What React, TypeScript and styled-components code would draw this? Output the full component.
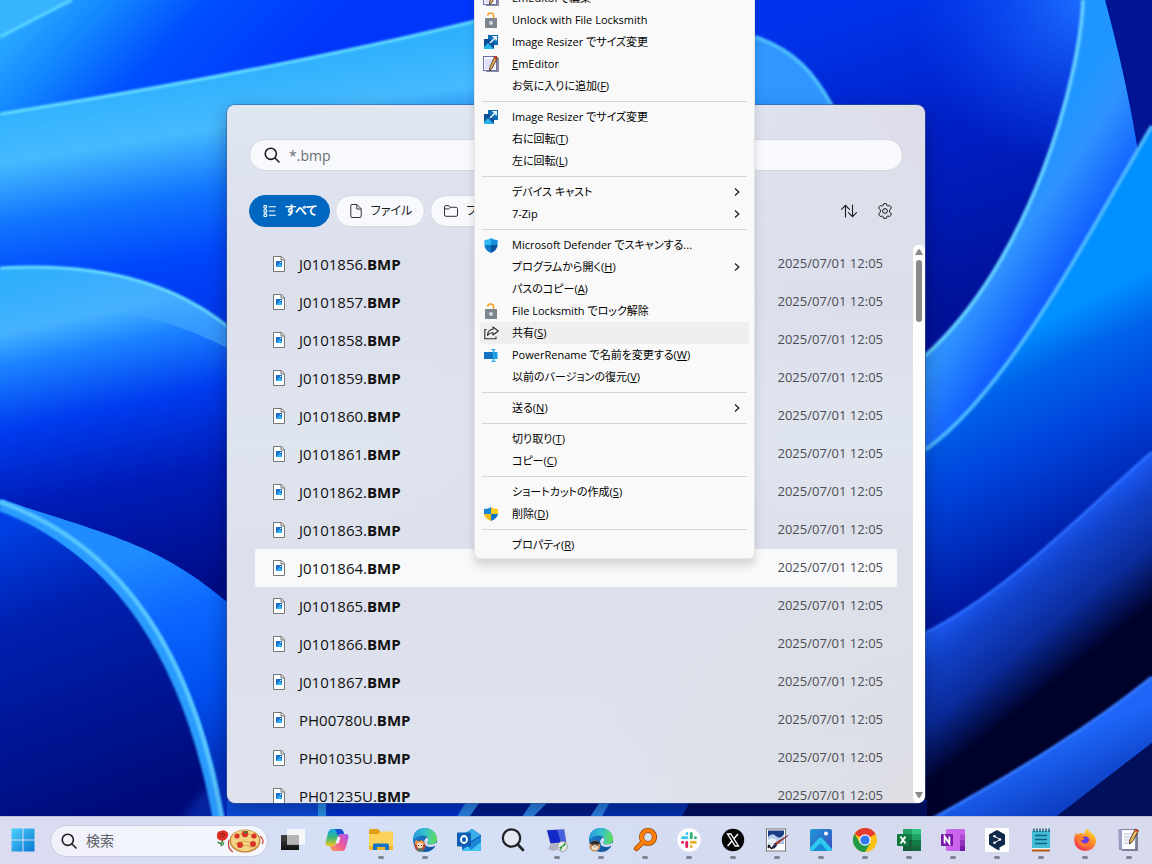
import React from "react";
import styled, { createGlobalStyle } from "styled-components";

const GlobalStyle = createGlobalStyle`
  * { box-sizing: border-box; }
  body {
    margin: 0;
    font-family: "Open Sans", "Noto Sans CJK JP", sans-serif;
    font-feature-settings: "palt" 1;
    color: #1b1b1b;
  }
  button, input { font: inherit; color: inherit; font-feature-settings: inherit; }
`;

const Desktop = styled.div`
  position: relative;
  display: flex;
  flex-direction: column;
  height: 100vh;
  overflow: hidden;
  background: #0022b8;
`;

const WallpaperSvg = styled.svg`
  position: absolute;
  inset: 0;
  width: 100%;
  height: 100%;
`;

const WorkArea = styled.main`
  position: relative;
  flex: 1;
  min-height: 0;
  display: flex;
  justify-content: center;
  padding: 105px 16px 13px;
`;

const Window = styled.section`
  position: relative;
  display: flex;
  flex-direction: column;
  flex: 0 1 698px;
  min-width: 0;
  border-radius: 8px;
  background:
    radial-gradient(circle at 52% 56%, rgba(222, 222, 235, 0.9), rgba(222, 222, 235, 0) 40%),
    radial-gradient(circle at 100% 0%, #dddde9, rgba(221, 221, 233, 0) 30%),
    radial-gradient(circle at 100% 100%, #dddee4, rgba(221, 222, 228, 0) 35%),
    linear-gradient(180deg, #e0e7f0 0, #dde2ee 14%, #dcdfec 28%, #dfe5ef 48%, #dde0ec 66%, #dfe3ee 100%);
  box-shadow: 0 0 0 1px rgba(60, 90, 150, 0.55), 0 8px 20px rgba(0, 0, 30, 0.35);
`;

const SearchBox = styled.label`
  display: flex;
  align-items: center;
  gap: 9px;
  height: 32px;
  margin: 34px 22px 0;
  padding: 0 14px;
  border: 1px solid #d3d6df;
  border-radius: 16px;
  background: #f8f9fc;
`;

const SearchInput = styled.input`
  flex: 1;
  min-width: 0;
  padding: 0;
  border: 0;
  outline: 0;
  background: transparent;
  font-size: 14px;
  color: #6a6c70;
`;

const FilterBar = styled.div`
  display: flex;
  align-items: center;
  gap: 5px;
  margin: 24px 28px 0 22px;
`;

const Chip = styled.button<{ $active?: boolean }>`
  display: flex;
  align-items: center;
  gap: 8px;
  height: 32px;
  padding: 0 12px 0 13px;
  border: 1px solid ${(p) => (p.$active ? "#0067c0" : "#d6d8e2")};
  border-radius: 16px;
  background: ${(p) => (p.$active ? "#0067c0" : "#f8f9fc")};
  color: ${(p) => (p.$active ? "#ffffff" : "#1b1b1b")};
  font-size: 12px;
  font-weight: ${(p) => (p.$active ? 700 : 400)};
  line-height: 20px;
  white-space: nowrap;
`;

const Spacer = styled.span`
  flex: 1;
`;

const IconButton = styled.button`
  display: grid;
  place-items: center;
  width: 24px;
  height: 24px;
  margin-left: 7px;
  padding: 0;
  border: 0;
  background: transparent;
`;

const Results = styled.div`
  flex: 1;
  min-height: 0;
  display: flex;
  gap: 16px;
  margin-top: 18px;
  padding-left: 28px;
`;

const ListClip = styled.div`
  flex: 1;
  min-width: 0;
  overflow: hidden;
`;

const FileTable = styled.table`
  width: 100%;
  border-collapse: collapse;
`;

const FileRow = styled.tr<{ $selected?: boolean }>`
  height: 38px;
  background: ${(p) => (p.$selected ? "#f8f9fb" : "transparent")};
`;

const NameCell = styled.td`
  padding: 0 0 0 18px;
  border-radius: 3px 0 0 3px;
`;

const NameBox = styled.div`
  display: flex;
  align-items: center;
  gap: 14px;
  font-size: 15px;
  line-height: 20px;
  color: #111;
`;

const Match = styled.b`
  font-weight: 700;
`;

const DateCell = styled.td`
  padding: 0 14px 2px 0;
  border-radius: 0 3px 3px 0;
  text-align: right;
  font-size: 13px;
  line-height: 18px;
  color: #4c4d52;
`;

const ScrollTrack = styled.div`
  display: flex;
  flex-direction: column;
  align-items: center;
  width: 12px;
  padding: 4px 0 5px;
  border-radius: 6px 6px 8px 6px;
  background: #fdfdfe;
`;

const ScrollThumb = styled.div`
  width: 6px;
  height: 62px;
  margin: 5px 0 auto;
  border-radius: 3px;
  background: #8a8a8a;
`;

const ContextMenu = styled.div`
  position: absolute;
  top: -124px;
  left: 247px;
  z-index: 2;
  width: 281px;
  padding: 5px 5px 2px;
  border: 1px solid #e4e4e6;
  border-radius: 6px;
  background: #f9f9f9;
  box-shadow: 0 7px 9px rgba(0, 0, 0, 0.14);
`;

const MenuRow = styled.button<{ $hover?: boolean }>`
  display: grid;
  grid-template-columns: 22px 1fr 6px;
  align-items: center;
  column-gap: 10px;
  width: 100%;
  height: 22px;
  padding: 0 9px 0 0;
  border: 0;
  border-radius: 4px;
  background: ${(p) => (p.$hover ? "#efefef" : "transparent")};
  color: #000;
  font-size: 11px;
  line-height: 18px;
  text-align: left;
  white-space: nowrap;
`;

const MenuIcon = styled.span`
  display: grid;
  place-items: center;
`;

const MenuDivider = styled.hr`
  height: 1px;
  margin: 4px 2px;
  border: 0;
  background: #d5d5d5;
`;

const Taskbar = styled.nav`
  position: relative;
  z-index: 3;
  display: flex;
  align-items: center;
  height: 48px;
  padding-left: 1px;
  border-top: 1px solid #b9bfd4;
  background: linear-gradient(90deg, #dcdcf1 0, #d6dcf3 18%, #d4e0f7 30%, #d5def4 50%, #d6daee 75%, #d8daee 100%);
`;

const TaskButton = styled.button`
  position: relative;
  display: grid;
  place-items: center;
  flex: 0 0 44px;
  height: 47px;
  padding: 0 0 1px;
  border: 0;
  background: transparent;
`;

const RunningDot = styled.span`
  position: absolute;
  bottom: 5px;
  left: 19px;
  width: 6px;
  height: 3px;
  border-radius: 2px;
  background: #7f8491;
`;

const TaskSearch = styled.label`
  display: flex;
  align-items: center;
  gap: 9px;
  flex: none;
  width: 218px;
  height: 32px;
  margin: 0 3px 0 5px;
  padding: 0 3px 0 10px;
  border: 1px solid #c9cde0;
  border-radius: 16px;
  background: linear-gradient(90deg, #f1f1fa, #f3f7fe);
`;

const TaskSearchInput = styled.input`
  flex: 1;
  width: 100%;
  min-width: 0;
  padding: 0;
  border: 0;
  outline: 0;
  background: transparent;
  font-size: 14px;
  &::placeholder { color: #5c5e66; opacity: 1; }
`;

/* ---------- wallpaper ---------- */

const Wallpaper = () => (
  <WallpaperSvg viewBox="0 0 1152 864" preserveAspectRatio="xMidYMid slice" aria-hidden="true">
    <defs>
      <linearGradient id="topband" gradientUnits="userSpaceOnUse" x1="10" y1="10" x2="190" y2="180">
        <stop offset="0" stopColor="#2fb0ff" />
        <stop offset="0.28" stopColor="#1286ff" />
        <stop offset="0.55" stopColor="#0050ff" />
        <stop offset="1" stopColor="#0036fa" />
      </linearGradient>
      <linearGradient id="band2" gradientUnits="userSpaceOnUse" x1="200" y1="75" x2="245" y2="345">
        <stop offset="0" stopColor="#2fb0fd" />
        <stop offset="0.2" stopColor="#46baff" />
        <stop offset="0.42" stopColor="#1174ff" />
        <stop offset="0.65" stopColor="#0046fc" />
        <stop offset="1" stopColor="#0030e4" />
      </linearGradient>
      <linearGradient id="band3" gradientUnits="userSpaceOnUse" x1="80" y1="268" x2="150" y2="600">
        <stop offset="0" stopColor="#2eaefc" />
        <stop offset="0.14" stopColor="#46b2ff" />
        <stop offset="0.24" stopColor="#1b82ff" />
        <stop offset="0.42" stopColor="#003cf0" />
        <stop offset="0.65" stopColor="#001cb8" />
        <stop offset="1" stopColor="#000c86" />
      </linearGradient>
      <linearGradient id="arc3shine" gradientUnits="userSpaceOnUse" x1="0" y1="0" x2="227" y2="0">
        <stop offset="0" stopColor="#46b2ff" stopOpacity="0" />
        <stop offset="1" stopColor="#46a8ff" />
      </linearGradient>
      <linearGradient id="flap" gradientUnits="userSpaceOnUse" x1="150" y1="550" x2="215" y2="770">
        <stop offset="0" stopColor="#1f8bff" />
        <stop offset="0.3" stopColor="#0c66ff" />
        <stop offset="0.65" stopColor="#0050f0" />
        <stop offset="1" stopColor="#0030c0" />
      </linearGradient>
      <linearGradient id="low" gradientUnits="userSpaceOnUse" x1="20" y1="520" x2="130" y2="816">
        <stop offset="0" stopColor="#0040e4" />
        <stop offset="0.3" stopColor="#0020b0" />
        <stop offset="1" stopColor="#000a78" />
      </linearGradient>
      <linearGradient id="right" gradientUnits="userSpaceOnUse" x1="860" y1="0" x2="960" y2="300">
        <stop offset="0" stopColor="#0034ec" />
        <stop offset="0.5" stopColor="#001fc4" />
        <stop offset="1" stopColor="#00129a" />
      </linearGradient>
      <radialGradient id="topRight" gradientUnits="userSpaceOnUse" cx="1080" cy="0" r="170">
        <stop offset="0" stopColor="#1c6cff" />
        <stop offset="1" stopColor="#0a4cf8" stopOpacity="0" />
      </radialGradient>
      <linearGradient id="ribA" gradientUnits="userSpaceOnUse" x1="1020" y1="170" x2="1100" y2="225">
        <stop offset="0" stopColor="#1f96ff" />
        <stop offset="0.4" stopColor="#2f92ff" />
        <stop offset="1" stopColor="#0f5cff" />
      </linearGradient>
      <linearGradient id="ribB" gradientUnits="userSpaceOnUse" x1="1025" y1="330" x2="1120" y2="530">
        <stop offset="0" stopColor="#0090ff" />
        <stop offset="0.2" stopColor="#0062ea" />
        <stop offset="0.5" stopColor="#0044dc" />
        <stop offset="1" stopColor="#0018a0" />
      </linearGradient>
      <linearGradient id="ribC" gradientUnits="userSpaceOnUse" x1="1020" y1="560" x2="1093" y2="652">
        <stop offset="0" stopColor="#1b5af2" />
        <stop offset="0.2" stopColor="#1243cc" />
        <stop offset="0.6" stopColor="#0a2c9c" />
        <stop offset="1" stopColor="#00022c" />
      </linearGradient>
      <linearGradient id="ribD" gradientUnits="userSpaceOnUse" x1="1060" y1="740" x2="1090" y2="810">
        <stop offset="0" stopColor="#1d66f8" />
        <stop offset="1" stopColor="#0a36b8" />
      </linearGradient>
      <filter id="glow" x="-10%" y="-10%" width="120%" height="120%"><feGaussianBlur stdDeviation="1" /></filter>
      <filter id="wide" x="-10%" y="-10%" width="120%" height="120%"><feGaussianBlur stdDeviation="5" /></filter>
    </defs>
    <rect width="1152" height="864" fill="#0020c0" />
    <rect x="700" width="452" height="864" fill="url(#right)" />
    <rect x="900" width="200" height="180" fill="url(#topRight)" />
    <path d="M0 0H480V24C330 57 160 88 0 118Z" fill="url(#topband)" />
    <path d="M0 0H72C48 12 25 24 0 37Z" fill="#38b4fe" />
    <path d="M0 37C25 24 48 12 72 0" fill="none" stroke="#5bd6ff" strokeWidth="3" filter="url(#glow)" />
    <path d="M0 114C160 88 330 57 475 21L500 14V500H0Z" fill="url(#band2)" />
    <path d="M0 114C160 88 330 57 475 21" fill="none" stroke="#63dcff" strokeWidth="3" filter="url(#glow)" />
    <path d="M0 268C95 262 170 280 227 326V700H0Z" fill="url(#band3)" />
    <path d="M0 268C95 262 170 280 227 326V348C170 318 100 302 0 302Z" fill="url(#arc3shine)" opacity="0.7" />
    <path d="M0 268C95 262 170 280 227 326" fill="none" stroke="#66dcff" strokeWidth="3" filter="url(#glow)" />
    <path d="M0 499C110 535 160 545 227 602V816C200 700 140 590 0 505Z" fill="url(#flap)" />
    <path d="M0 508C120 565 190 660 216 816V864H0Z" fill="url(#low)" />
    <path d="M150 864C180 830 190 800 214 782L226 864Z" fill="#0a3cc8" opacity="0.5" filter="url(#wide)" />
    <path d="M0 505C120 548 190 660 219 820" fill="none" stroke="#2a9cff" strokeWidth="12" filter="url(#glow)" />
    <path d="M0 502C122 545 194 655 222 820" fill="none" stroke="#5cc8ff" strokeWidth="4" filter="url(#glow)" />

    <path d="M755 37C795 50 815 75 832 106H755Z" fill="#2f97ff" />
    <path d="M755 37C795 50 815 75 832 106" fill="none" stroke="#4cbcff" strokeWidth="4" filter="url(#glow)" />
    <path d="M1105 0C1118 48 1130 100 1138 152L1152 126V0Z" fill="#001494" />
    <path d="M1083 0C1080 80 1030 262 925 356V470L1080 280L1138 152C1130 100 1118 48 1105 0Z" fill="url(#ribA)" />
    <path d="M1083 0C1080 80 1030 262 925 356" fill="none" stroke="#62ccff" strokeWidth="4" filter="url(#glow)" />
    <path d="M1152 126C1090 230 1010 390 925 450V640L1152 500Z" fill="url(#ribB)" />
    <path d="M1152 126C1090 230 1010 390 925 450" fill="none" stroke="#4cb8ff" strokeWidth="4" filter="url(#glow)" />
    <path d="M1152 452C1080 515 1010 590 925 633V864H1152Z" fill="#00022c" />
    <path d="M1152 452C1080 515 1010 590 925 633V864H1152Z" fill="url(#ribC)" />
    <path d="M1152 452C1080 515 1010 590 925 633" fill="none" stroke="#2c6cff" strokeWidth="3" filter="url(#glow)" />
    <path d="M1152 677C1090 727 1020 770 930 820H1052L1152 743Z" fill="url(#ribD)" />
    <path d="M1152 677C1090 727 1020 770 930 820" fill="none" stroke="#3478ff" strokeWidth="3" filter="url(#glow)" />
    <path d="M1152 743L1052 820H1152Z" fill="#020f5c" />

    <rect x="227" y="800" width="700" height="20" fill="#001c8c" />
    <path d="M227 800H318V820H227Z" fill="#0a4ee0" />
    <path d="M325 800H470L455 820H325Z" fill="#0034d0" />
    <path d="M318 800H326V820H318Z" fill="#2c96f0" />
    <path d="M466 802H480L467 820H455ZM532 802H548L530 820H520ZM600 802H616L602 820H588Z" fill="#2b86ec" />
    <path d="M610 802H700L680 820H600Z" fill="#0034b8" />
    <path d="M690 802H927V820H680Z" fill="#000f60" />
  </WallpaperSvg>
);

/* ---------- small glyphs ---------- */

const SearchGlyph = ({ size = 16 }: { size?: number }) => (
  <svg width={size} height={size} viewBox="0 0 16 16" fill="none" stroke="#1f1f1f" strokeWidth="1.6" strokeLinecap="round" aria-hidden="true">
    <circle cx="6.8" cy="6.8" r="5.6" />
    <path d="M11 11L15 15" />
  </svg>
);

const AllGlyph = () => (
  <svg width="14" height="14" viewBox="0 0 14 14" fill="none" stroke="#fff" strokeWidth="1.1" aria-hidden="true">
    <rect x="1" y="1.5" width="2.6" height="2.6" rx="0.6" />
    <rect x="1" y="5.7" width="2.6" height="2.6" rx="0.6" />
    <rect x="1" y="9.9" width="2.6" height="2.6" rx="0.6" />
    <path d="M5.8 2.8H13M5.8 7H12M5.8 11.2H13" />
  </svg>
);

const FileGlyph = () => (
  <svg width="14" height="14" viewBox="0 0 14 14" fill="none" stroke="#333" aria-hidden="true">
    <path d="M3 .5H8L12.2 4.8V12.3A1.2 1.2 0 0 1 11 13.5H3A1.2 1.2 0 0 1 1.8 12.3V1.7A1.2 1.2 0 0 1 3 .5Z" />
    <path d="M7.8 .8V5H12" />
  </svg>
);

const FolderGlyph = () => (
  <svg width="14" height="14" viewBox="0 0 14 14" fill="none" stroke="#333" aria-hidden="true">
    <path d="M.5 3A1.3 1.3 0 0 1 1.8 1.7H4.8L6.4 3.3H12.2A1.3 1.3 0 0 1 13.5 4.6V11A1.3 1.3 0 0 1 12.2 12.3H1.8A1.3 1.3 0 0 1 .5 11Z" />
    <path d="M.5 4.9H4.8L6.4 3.3" />
  </svg>
);

const SortGlyph = () => (
  <svg width="18" height="14" viewBox="0 0 18 14" fill="none" stroke="#1b1b1b" strokeWidth="1.1" strokeLinecap="round" aria-hidden="true">
    <path d="M5.5 13V1.5M1.5 5.3L5.5 1.3L9.5 5.3M12.5 1V12.5M8.5 8.7L12.5 12.7L16.5 8.7" />
  </svg>
);

const GearGlyph = () => (
  <svg width="16" height="16" viewBox="0 0 16 16" fill="none" stroke="#1b1b1b" strokeLinejoin="round" aria-hidden="true">
    <circle cx="8" cy="8" r="2.4" />
    <path d="M6.5 .8Q8 .4 9.500 .8L9.900 2.400Q10.200 3.100 11 3L12.800 2.500Q13.900 3.600 14.400 5L13.200 6.300Q12.500 7 12.500 8Q12.500 9 13.200 9.700L14.400 11Q13.900 12.400 12.800 13.500L11 13Q10.200 12.900 9.900 13.600L9.500 15.200Q8 15.600 6.500 15.200L6.100 13.600Q5.800 12.900 5 13L3.200 13.500Q2.100 12.400 1.600 11L2.800 9.700Q3.500 9 3.500 8Q3.500 7 2.800 6.300L1.600 5Q2.100 3.600 3.200 2.500L5 3Q5.800 3.100 6.100 2.400Z" />
  </svg>
);

const BmpGlyph = () => (
  <svg width="12" height="16" viewBox="0 0 12 16" aria-hidden="true">
    <path d="M.5 .5H8.500L11.500 3.500V15.500H.5Z" fill="#fff" stroke="#767676" />
    <path d="M8 .5V4H11.500" fill="#e8e8e8" stroke="#767676" />
    <rect x="3" y="5" width="6" height="6" fill="#1b6fd0" />
    <path d="M3 11L6.500 7L9 9.500V11Z" fill="#2fb4f4" />
    <rect x="7" y="6" width="1" height="1" fill="#fff" />
  </svg>
);

const ArrowGlyph = ({ down }: { down?: boolean }) => (
  <svg width="8" height="6" viewBox="0 0 8 6" aria-hidden="true">
    <path d={down ? "M0 0H8L5 5.500Q4 6.300 3 5.500Z" : "M0 6H8L5 .5Q4 -.3 3 .5Z"} fill="#8a8a8a" />
  </svg>
);

const ChevronGlyph = () => (
  <svg width="6" height="10" viewBox="0 0 6 10" fill="none" stroke="#222" strokeWidth="1.3" aria-hidden="true">
    <path d="M1 1.500L4.800 5L1 8.500" />
  </svg>
);

const EditorGlyph = () => (
  <svg width="16" height="16" viewBox="0 0 16 16" aria-hidden="true">
    <path d="M3 2H16V16H3Z" fill="#8d8d99" />
    <rect x=".5" y=".5" width="13" height="14" fill="#f6f7ff" stroke="#6f6fb0" />
    <path d="M2 4H10M2 6H9M2 8H8M2 10H7M2 12H7" stroke="#b8bde8" strokeWidth=".8" />
    <path d="M12 0L14.500 1.500L9 12.500L6.500 14.500L6.800 11.500Z" fill="#e9b45a" stroke="#3a2310" strokeWidth=".8" />
    <path d="M12 0L14.500 1.500L13.300 3.800L10.800 2.500Z" fill="#cf3a2c" />
  </svg>
);

const LockGlyph = () => (
  <svg width="14" height="16" viewBox="0 0 14 16" aria-hidden="true">
    <path d="M3.600 3.500Q4 1 6.500 1Q9.600 1 9.600 4V6.500" fill="none" stroke="#f0a024" strokeWidth="1.600" />
    <rect x="1" y="6" width="12" height="10" rx=".8" fill="#7d858e" />
    <circle cx="7" cy="11" r="2" fill="#d5dae0" />
  </svg>
);

const ResizeGlyph = () => (
  <svg width="14" height="14" viewBox="0 0 14 14" aria-hidden="true">
    <rect x="4" width="10" height="10" fill="#0b6cb8" />
    <path d="M0 4H5L10 9V14H0Z" fill="#0f4f98" />
    <path d="M0 12L4 8L10 14H0Z" fill="#28b4e8" />
    <path d="M6 8L12 2M8.500 1.800H12.200V5.500" stroke="#fff" strokeWidth="1.400" fill="none" />
  </svg>
);

const DefenderGlyph = () => (
  <svg width="14" height="15" viewBox="0 0 14 15" aria-hidden="true">
    <path d="M7 0Q9.500 1.800 13.600 2V7H7Z" fill="#178ee0" />
    <path d="M7 0Q4.500 1.800 .4 2V7H7Z" fill="#31b8ee" />
    <path d="M.4 7H7V15Q.6 12 .4 7Z" fill="#0f78cc" />
    <path d="M13.600 7H7V15Q13.400 12 13.600 7Z" fill="#0a529c" />
  </svg>
);

const UacGlyph = () => (
  <svg width="14" height="14" viewBox="0 0 14 14" aria-hidden="true">
    <path d="M7 0Q9.500 1.800 14 2V7H7Z" fill="#fccb1c" />
    <path d="M7 0Q4.500 1.800 0 2V7H7Z" fill="#1a86d8" />
    <path d="M0 7H7V14Q.8 11.500 0 7Z" fill="#f8c010" />
    <path d="M14 7H7V14Q13.200 11.500 14 7Z" fill="#1474c4" />
  </svg>
);

const ShareGlyph = () => (
  <svg width="15" height="14" viewBox="0 0 15 14" fill="none" stroke="#2a2a2a" strokeWidth="1.100" strokeLinejoin="round" aria-hidden="true">
    <path d="M2.500 3.500H.8V12.800H12V10.500" />
    <path d="M9 1L14.300 5L9 9V6.800Q5.500 6.600 3.500 9.300Q3.800 3.800 9 3.300Z" />
  </svg>
);

const RenameGlyph = () => (
  <svg width="14" height="13" viewBox="0 0 14 13" aria-hidden="true">
    <rect y="3" width="9" height="7" fill="#1272c4" />
    <rect x="10" y="3" width="3.500" height="7" fill="#1d9be0" />
    <path d="M7.500 .7H11.500M7.500 12.300H11.500M9.500 .7V12.300" stroke="#28a8e8" strokeWidth="1.300" />
  </svg>
);

/* ---------- taskbar icons ---------- */

const T = ({ children }: { children: React.ReactNode }) => (
  <svg width="24" height="24" viewBox="0 0 24 24" aria-hidden="true">{children}</svg>
);

const StartIcon = () => (
  <T>
    <defs><linearGradient id="win" x1="0" y1="0" x2="1" y2="1"><stop offset="0" stopColor="#4cd0fb" /><stop offset="1" stopColor="#0a78d4" /></linearGradient></defs>
    <path d="M.5 .5H11.500V11.500H.5ZM12.500 .5H23.500V11.500H12.500ZM.5 12.500H11.500V23.500H.5ZM12.500 12.500H23.500V23.500H12.500Z" fill="url(#win)" />
  </T>
);

const PizzaArt = () => (
  <svg width="48" height="26" viewBox="0 0 48 26" aria-hidden="true">
    <path d="M6 10Q7 14 5 18" stroke="#2f7d3a" strokeWidth="1.400" fill="none" />
    <path d="M1 14Q4 13 6 16Q3 17 1 14ZM8 13Q9 17 6 18Z" fill="#3c9148" />
    <path d="M1 7Q1 3 5 3Q9 1 12 5Q13 9 9 12Q4 14 1 10Z" fill="#dc2f28" />
    <path d="M4 6Q7 4 9 7Q7 10 5 8" stroke="#9c1714" fill="none" />
    <path d="M13 12Q11 21 17 24M44 8Q49 12 46 16" stroke="#d63a2f" strokeWidth="1.200" fill="none" />
    <ellipse cx="29" cy="13" rx="15.500" ry="11.500" fill="#c98a3a" />
    <ellipse cx="29" cy="12.500" rx="14" ry="10.500" fill="#f3d384" />
    <path d="M20 8Q28 3 38 8M19 16Q28 10 39 17M23 20Q30 15 36 20" stroke="#dfa64e" fill="none" />
    <g fill="#d8352a"><circle cx="21" cy="8" r="2.600" /><circle cx="29" cy="6" r="3.200" /><circle cx="38" cy="8" r="2.600" /><circle cx="24" cy="17" r="3" /><circle cx="37" cy="16" r="3" /></g>
    <path d="M25 2L29 4L33 2L30 6Z" fill="#2f8a3e" />
  </svg>
);

const TaskViewIcon = () => (
  <T>
    <defs><linearGradient id="tv" x1="0" y1="0" x2="0" y2="1"><stop offset="0" stopColor="#444" /><stop offset="1" stopColor="#111" /></linearGradient></defs>
    <rect y="7" width="18" height="15" fill="url(#tv)" />
    <rect x="6" y="1" width="18" height="15.500" fill="#f7f7f9" />
    <rect x="6" y="7" width="12" height="9.500" fill="#b4b4b6" />
  </T>
);

const CopilotIcon = () => (
  <T>
    <defs>
      <linearGradient id="cp1" x1="0" y1="0" x2="0" y2="1"><stop offset="0" stopColor="#16a8ee" /><stop offset=".5" stopColor="#3ab87a" /><stop offset="1" stopColor="#f4c520" /></linearGradient>
      <linearGradient id="cp2" x1="1" y1="0" x2="0" y2="1"><stop offset="0" stopColor="#a45cf4" /><stop offset=".5" stopColor="#f0569a" /><stop offset="1" stopColor="#fba04c" /></linearGradient>
    </defs>
    <path d="M7 1H15Q17.500 1 18.500 4L19 6H16Q13.500 6 12.800 8.500L10.500 16Q9.800 18 7.500 18H3Q0 18 .5 14.500L3 5Q4 1 7 1Z" fill="url(#cp1)" />
    <path d="M10 1H15Q17.500 1 18.500 4L19 6.500Q15 5 13 8Z" fill="#1a50dc" />
    <path d="M17 23H9Q6.500 23 5.500 20L5 18H8Q10.500 18 11.200 15.500L13.500 8Q14.200 6 16.500 6H21Q24 6 23.500 9.500L21 19Q20 23 17 23Z" fill="url(#cp2)" />
    <path d="M12.600 9L15.500 9.500L13.500 15.500H10.800Z" fill="#f2f0fa" />
  </T>
);

const ExplorerIcon = () => (
  <T>
    <path d="M0 2.500Q0 1 1.500 1H9L11.500 4H24V9H0Z" fill="#e2a016" />
    <path d="M0 6H9L12 3.500H24V22H0Z" fill="#fdd25a" />
    <path d="M0 18H24V20.500Q24 22 22.500 22H1.500Q0 22 0 20.500Z" fill="#f4b52c" />
    <path d="M4 22V17Q4 15.500 5.500 15.500H18.500Q20 15.500 20 17V22H16V19H8V22Z" fill="#1374c8" />
  </T>
);

const EdgeIcon = ({ badge }: { badge: "girl" | "bear" }) => (
  <T>
    <defs>
      <linearGradient id={"eg" + badge} x1="0" y1=".2" x2="1" y2=".3"><stop offset="0" stopColor="#2896dc" /><stop offset=".5" stopColor="#34c2d0" /><stop offset="1" stopColor="#5fdc5a" /></linearGradient>
      <linearGradient id={"eb" + badge} x1="0" y1="0" x2="1" y2="1"><stop offset="0" stopColor="#1b8ada" /><stop offset="1" stopColor="#0c4a94" /></linearGradient>
    </defs>
    <circle cx="12" cy="12" r="12" fill={`url(#eb${badge})`} />
    <path d="M0 11Q1 0 12 0Q22 .5 24 10Q24.500 16 18 16.500Q14 16.500 14 14.500Q15.500 13 15.300 11Q14.500 8 10.500 7.500Q4 7 0 12Z" fill={`url(#eg${badge})`} />
    <path d="M14.300 9.500Q16.500 12 14 14.500Q14 16.500 18 16.500Q21.500 16.500 23.300 14.500L24 17L22 18Q16 20.500 12 17Q9.500 11.500 14.300 9.500Z" fill="#d7def3" />
    {badge === "girl" ? (
      <g>
        <circle cx="7" cy="18" r="5.500" fill="#b34a34" />
        <path d="M1.500 15L3 12L6 13.500L9 12L12 15.500L10 17H3Z" fill="#f0924c" />
        <circle cx="7" cy="17.500" r="3" fill="#fbd9bc" />
        <path d="M3.500 22Q7 19 10.500 22L7 24Z" fill="#3f7d6a" />
        <path d="M5.500 17V18M8.500 17V18" stroke="#333" />
      </g>
    ) : (
      <g>
        <circle cx="5.800" cy="18" r="5.500" fill="#c9925c" />
        <path d="M1 15Q6 10.500 11 15L10 16.500H2Z" fill="#2c2a2e" />
        <ellipse cx="6" cy="19.500" rx="3.200" ry="2.500" fill="#f5e6d2" />
        <path d="M4 17V18M8 17V18M5.500 19H6.500" stroke="#222" />
      </g>
    )}
  </T>
);

const OutlookIcon = () => (
  <T>
    <path d="M5 7L15 1L24 7V21.500Q24 23 22.500 23H7Q5 23 5 21Z" fill="#1466b8" />
    <path d="M8 5L15 1L24 7L14 13Z" fill="#38aee8" />
    <path d="M5 22L24 9V21.500Q24 23 22.500 23H7Z" fill="#42c4f2" />
    <path d="M10 17L24 9V14L14 22Z" fill="#1a86d8" />
    <rect y="4.500" width="14" height="14" rx="1" fill="#0c5fb4" />
    <ellipse cx="7" cy="11.500" rx="3" ry="3.500" fill="none" stroke="#fff" strokeWidth="1.800" />
  </T>
);

const MagnifierIcon = () => (
  <T>
    <circle cx="10.500" cy="10" r="8.700" fill="#e4e8f2" stroke="#202226" strokeWidth="2.200" />
    <path d="M16.800 16.500L22 22" stroke="#202226" strokeWidth="2.600" strokeLinecap="round" />
  </T>
);

const RemoteIcon = () => (
  <T>
    <path d="M6 15L13 14L17 20L8 23Q5 22 3 21Z" fill="#b0b3bf" />
    <path d="M1 1.500L20 .8L22 15L5 16.500Z" fill="#c9ccd6" />
    <path d="M2 2.200L19 1.500L21 14L5.500 15.500Z" fill="#1428c8" />
    <path d="M12 1.800L19 1.500L21 14L16 14.500Z" fill="#6a86ec" opacity=".6" />
    <circle cx="17.500" cy="18.500" r="5" fill="#e6e9e6" stroke="#8d9096" strokeWidth=".8" />
    <path d="M14.500 20L17 18.500L15.500 22M20.500 16.500L18 18L20 15" stroke="#2d9a3a" strokeWidth="1.200" fill="none" />
  </T>
);

const OrangeSearchIcon = () => (
  <T>
    <circle cx="15" cy="9" r="6.500" fill="none" stroke="#9a4a08" strokeWidth="5.200" />
    <path d="M10 14L3.500 20.500" stroke="#9a4a08" strokeWidth="5.200" strokeLinecap="round" />
    <circle cx="15" cy="9" r="6.500" fill="none" stroke="#ff7f0a" strokeWidth="3.600" />
    <path d="M10.500 13.500L3.500 20.500" stroke="#ff7f0a" strokeWidth="3.600" strokeLinecap="round" />
  </T>
);

const SlackIcon = () => (
  <T>
    <circle cx="12" cy="12" r="11.700" fill="#fff" />
    <g strokeWidth="3" strokeLinecap="round">
      <path d="M10 9.800H5.600M10 5.500V5.600" stroke="#36c5f0" />
      <path d="M14.200 5.600V9.800M18.400 9.800H18.500" stroke="#2eb67d" />
      <path d="M14.200 14.200H18.400M14.200 18.400V18.500" stroke="#ecb22e" />
      <path d="M9.800 14.200V18.400M5.600 14.200H5.500" stroke="#e01e5a" />
    </g>
    <path d="M12 4V20M4 12H20" stroke="#fff" strokeWidth="1" />
  </T>
);

const XIcon = () => (
  <T>
    <circle cx="12" cy="12" r="11.200" fill="#050505" />
    <path d="M6.500 6H9.800L17.500 18H14.200Z" fill="none" stroke="#fff" strokeWidth="1.300" />
    <path d="M17 6L12.800 10.800M11 13L6.600 18" stroke="#fff" strokeWidth="1.400" />
  </T>
);

const PaintIcon = () => (
  <T>
    <rect x="1.500" y="1" width="19" height="22" fill="#fff" stroke="#777" />
    <rect x="3" y="2.500" width="16" height="13" fill="#1c3c86" />
    <path d="M3 9Q7 4 11 8T19 6V15.500H3Z" fill="#b8cdea" />
    <path d="M3 12Q8 8 12 13L10 15.500H3Z" fill="#e8f0fa" />
    <path d="M23 7.500L11 17L9.500 15.500Z" fill="#c8302a" stroke="#6a1a18" strokeWidth=".6" />
    <path d="M11 15.500Q8 16 6 21Q10 21 12 17.500Z" fill="#23284c" />
    <path d="M3 17L7 21M3 20L5 17" stroke="#14141c" strokeWidth="1.600" />
  </T>
);

const PhotosIcon = () => (
  <T>
    <defs><linearGradient id="ph" x1="0" y1="0" x2="1" y2="1"><stop offset="0" stopColor="#1f98d8" /><stop offset="1" stopColor="#3b4cc0" /></linearGradient></defs>
    <rect x="1" y="1" width="22" height="22" rx="2" fill="url(#ph)" />
    <path d="M1 20L10 10Q11.500 8.500 13 10L23 21Q23 23 21 23H3Q1 23 1 21Z" fill="#2fc8ee" />
    <path d="M11.500 15L18.500 23H3.500Z" fill="#0e78cc" opacity=".75" />
    <circle cx="17" cy="5.500" r="2" fill="#fff" />
  </T>
);

const ChromeIcon = () => (
  <T>
    <circle cx="12" cy="12" r="12" fill="#fbc116" />
    <path d="M12 12L1.600 6A12 12 0 0 1 22.400 6Z" fill="#e33b2e" />
    <path d="M12 0A12 12 0 0 1 22.400 6H12Z" fill="#e33b2e" />
    <path d="M1.600 6L7 15L12 17.500L12 24A12 12 0 0 1 1.600 6Z" fill="#229a4a" />
    <path d="M12 24L17.200 15L12 14L7 15Z" fill="#229a4a" />
    <circle cx="12" cy="12" r="5.800" fill="#fff" />
    <circle cx="12" cy="12" r="4.600" fill="#2f78ee" />
  </T>
);

const ExcelIcon = () => (
  <T>
    <rect x="6" y="1" width="18" height="22" rx="1" fill="#1c8a50" />
    <path d="M6 1H15V6.500H6Z" fill="#21a366" /><path d="M15 1H24V6.500H15Z" fill="#33c481" />
    <path d="M15 6.500H24V12H15Z" fill="#21a366" /><path d="M6 6.500H15V12H6Z" fill="#107c41" />
    <path d="M6 12H15V23H6Z" fill="#185c37" /><path d="M15 12H24V17.500H15Z" fill="#107c41" /><path d="M15 17.500H24V23H15Z" fill="#17683c" />
    <rect y="6" width="12" height="12" rx="1" fill="#0f7a3f" />
    <path d="M3.500 8.500L8.500 15.500M8.500 8.500L3.500 15.500" stroke="#fff" strokeWidth="1.900" />
  </T>
);

const OneNoteIcon = () => (
  <T>
    <rect x="5" y="1" width="19" height="22" rx="1" fill="#ca64ea" />
    <path d="M19 6.500H24V12H19Z" fill="#ae4bd5" /><path d="M19 12H24V17.500H19Z" fill="#9332bf" /><path d="M19 17.500H24V23H19Z" fill="#7719aa" />
    <rect y="6" width="12" height="12" rx="1" fill="#7719aa" />
    <path d="M3.600 15.500V8.500L8.400 15.500V8.500" stroke="#fff" strokeWidth="1.800" fill="none" />
  </T>
);

const DeeplIcon = () => (
  <T>
    <rect width="24" height="24" rx="2" fill="#fff" />
    <path d="M12 2L20 6.500V16.500L14.500 19.500V22.500L11 21L4 16.500V6.500Z" fill="#10294a" />
    <path d="M9.500 8.200L15 11.500L9.500 14.800" stroke="#fff" strokeWidth="1" fill="none" />
    <g fill="#fff"><circle cx="9.500" cy="8.200" r="1.300" /><circle cx="15" cy="11.500" r="1.300" /><circle cx="9.500" cy="14.800" r="1.300" /></g>
  </T>
);

const NotepadIcon = () => (
  <T>
    <path d="M3 3H21V21H3Z" fill="#42bcd6" />
    <path d="M3 21H21V22.500Q21 23.500 20 23.500H4Q3 23.500 3 22.500Z" fill="#b4540f" />
    <path d="M3 20H21V21.500H3Z" fill="#eef6f8" />
    <path d="M5 .5V4M8 .5V4M11 .5V4M14 .5V4M17 .5V4M20 .5V4" stroke="#0a4c68" strokeWidth="1.300" />
    <path d="M6 7.500H18M6 11.500H18M6 15.500H18" stroke="#0d6280" strokeWidth="1.500" />
  </T>
);

const FirefoxIcon = () => (
  <T>
    <defs><linearGradient id="ff" x1=".8" y1="0" x2=".2" y2="1"><stop offset="0" stopColor="#ffe23c" /><stop offset=".45" stopColor="#ff9126" /><stop offset="1" stopColor="#f0265e" /></linearGradient></defs>
    <path d="M1 12Q1 8 3.500 4.500L4.500 7Q6 4.500 9 5L11 6.500Q12 2 14.500 .5Q15.500 3 19 5.500Q20 7 20.500 6Q23.500 10 23 14Q21.500 22.500 12 23Q2 22.500 1 12Z" fill="url(#ff)" />
    <circle cx="12" cy="13.500" r="5" fill="#6a3be0" />
    <path d="M4.500 10Q8 8.500 12 10.500Q10 12.500 8 12.500Q9 16 13 15.500Q16 14.500 15.500 11Q18.500 14 16 17.500Q12.500 20 8.500 18Q4.500 15 4.500 10Z" fill="#ff7a2c" />
  </T>
);

const EmEditorIcon = () => (
  <T>
    <path d="M5 3H21V23H5Z" fill="#7c7e90" />
    <path d="M2 1.500H19L18.500 21.500H2.500Z" fill="#fbfbff" stroke="#7d80a4" />
    <path d="M2 1.500H5V21.500H2.500Z" fill="#9b9ec4" />
    <path d="M7 6H16M7 9H15M7 12H13M7 15H12" stroke="#b9bcd2" />
    <path d="M18.500 1L21.500 2.500L15.500 13.500L12.500 16L12.800 12Z" fill="#f0c060" stroke="#3a2a12" strokeWidth=".9" />
    <path d="M18.500 1L21.500 2.500L20.500 4.500L17.500 3Z" fill="#d8432f" />
  </T>
);

/* ---------- data ---------- */

const files = [
  "J0101856", "J0101857", "J0101858", "J0101859", "J0101860", "J0101861", "J0101862", "J0101863",
  "J0101864", "J0101865", "J0101866", "J0101867", "PH00780U", "PH01035U", "PH01235U",
];

type Item = { text: string; accel?: string; pre?: boolean; icon?: React.ReactNode; sub?: boolean; hover?: boolean };

const menuGroups: Item[][] = [
  [
    { text: "EmEditorで編集", icon: <EditorGlyph /> },
    { text: "Unlock with File Locksmith", icon: <LockGlyph /> },
    { text: "Image Resizer でサイズ変更", icon: <ResizeGlyph /> },
    { text: "mEditor", accel: "E", pre: true, icon: <EditorGlyph /> },
    { text: "お気に入りに追加", accel: "F" },
  ],
  [
    { text: "Image Resizer でサイズ変更", icon: <ResizeGlyph /> },
    { text: "右に回転", accel: "T" },
    { text: "左に回転", accel: "L" },
  ],
  [
    { text: "デバイス キャスト", sub: true },
    { text: "7-Zip", sub: true },
  ],
  [
    { text: "Microsoft Defender でスキャンする...", icon: <DefenderGlyph /> },
    { text: "プログラムから開く", accel: "H", sub: true },
    { text: "パスのコピー", accel: "A" },
    { text: "File Locksmith でロック解除", icon: <LockGlyph /> },
    { text: "共有", accel: "S", icon: <ShareGlyph />, hover: true },
    { text: "PowerRename で名前を変更する", accel: "W", icon: <RenameGlyph /> },
    { text: "以前のバージョンの復元", accel: "V" },
  ],
  [{ text: "送る", accel: "N", sub: true }],
  [
    { text: "切り取り", accel: "T" },
    { text: "コピー", accel: "C" },
  ],
  [
    { text: "ショートカットの作成", accel: "S" },
    { text: "削除", accel: "D", icon: <UacGlyph /> },
  ],
  [{ text: "プロパティ", accel: "R" }],
];

const apps: { name: string; icon: React.ReactNode; running?: boolean }[] = [
  { name: "タスク ビュー", icon: <TaskViewIcon /> },
  { name: "Copilot", icon: <CopilotIcon /> },
  { name: "エクスプローラー", icon: <ExplorerIcon />, running: true },
  { name: "Edge", icon: <EdgeIcon badge="girl" />, running: true },
  { name: "Outlook", icon: <OutlookIcon /> },
  { name: "Everything Search", icon: <MagnifierIcon /> },
  { name: "リモート デスクトップ", icon: <RemoteIcon />, running: true },
  { name: "Edge 2", icon: <EdgeIcon badge="bear" />, running: true },
  { name: "Everything", icon: <OrangeSearchIcon />, running: true },
  { name: "Slack", icon: <SlackIcon />, running: true },
  { name: "X", icon: <XIcon />, running: true },
  { name: "ペイント", icon: <PaintIcon />, running: true },
  { name: "フォト", icon: <PhotosIcon />, running: true },
  { name: "Chrome", icon: <ChromeIcon />, running: true },
  { name: "Excel", icon: <ExcelIcon />, running: true },
  { name: "OneNote", icon: <OneNoteIcon />, running: true },
  { name: "DeepL", icon: <DeeplIcon />, running: true },
  { name: "メモ帳", icon: <NotepadIcon />, running: true },
  { name: "Firefox", icon: <FirefoxIcon />, running: true },
  { name: "EmEditor", icon: <EmEditorIcon />, running: true },
];

export default function App() {
  return (
    <>
      <GlobalStyle />
      <Desktop>
        <Wallpaper />
        <WorkArea>
          <Window>
            <SearchBox>
              <SearchGlyph />
              <SearchInput type="text" defaultValue="*.bmp" aria-label="ファイル検索" />
            </SearchBox>
            <FilterBar>
              <Chip $active aria-pressed="true"><AllGlyph />すべて</Chip>
              <Chip aria-pressed="false"><FileGlyph />ファイル</Chip>
              <Chip aria-pressed="false"><FolderGlyph />フォルダ</Chip>
              <Spacer />
              <IconButton aria-label="並べ替え"><SortGlyph /></IconButton>
              <IconButton aria-label="設定"><GearGlyph /></IconButton>
            </FilterBar>
            <Results>
              <ListClip>
                <FileTable>
                  <tbody>
                    {files.map((f) => (
                      <FileRow key={f} $selected={f === "J0101864"}>
                        <NameCell>
                          <NameBox><BmpGlyph /><span>{f}.<Match>BMP</Match></span></NameBox>
                        </NameCell>
                        <DateCell>2025/07/01 12:05</DateCell>
                      </FileRow>
                    ))}
                  </tbody>
                </FileTable>
              </ListClip>
              <ScrollTrack aria-hidden="true">
                <ArrowGlyph />
                <ScrollThumb />
                <ArrowGlyph down />
              </ScrollTrack>
            </Results>
            <ContextMenu role="menu">
              {menuGroups.map((group, g) => (
                <React.Fragment key={g}>
                  {g > 0 && <MenuDivider />}
                  {group.map((item) => (
                    <MenuRow key={item.text} role="menuitem" $hover={item.hover}>
                      <MenuIcon>{item.icon}</MenuIcon>
                      <span>
                        {item.pre ? <><u>{item.accel}</u>{item.text}</> : item.text}
                        {item.accel && !item.pre && <>(<u>{item.accel}</u>)</>}
                      </span>
                      {item.sub && <ChevronGlyph />}
                    </MenuRow>
                  ))}
                </React.Fragment>
              ))}
            </ContextMenu>
          </Window>
        </WorkArea>
        <Taskbar aria-label="タスク バー">
          <TaskButton aria-label="スタート"><StartIcon /></TaskButton>
          <TaskSearch>
            <SearchGlyph />
            <TaskSearchInput type="text" placeholder="検索" aria-label="検索" />
            <PizzaArt />
          </TaskSearch>
          {apps.map((app) => (
            <TaskButton key={app.name} aria-label={app.name}>
              {app.icon}
              {app.running && <RunningDot />}
            </TaskButton>
          ))}
        </Taskbar>
      </Desktop>
    </>
  );
}
